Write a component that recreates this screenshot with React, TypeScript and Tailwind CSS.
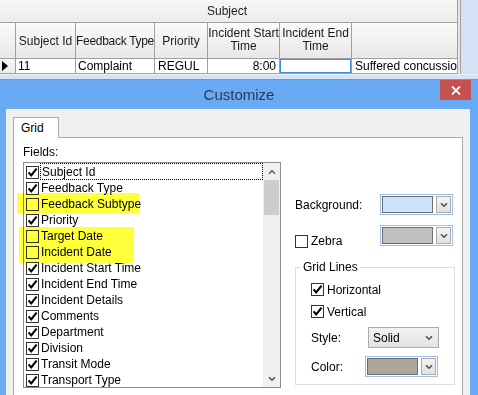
import React from "react";

const Check = ({ checked }: { checked: boolean }) => (
  <div className="w-[13px] h-[13px] border border-[#333333] bg-white flex items-center justify-center shrink-0">
    {checked && (
      <svg width="11" height="11" viewBox="0 0 11 11">
        <path d="M1.6 5.4 L4.2 8.4 L9.6 1.6" stroke="#000" strokeWidth="2.1" fill="none" />
      </svg>
    )}
  </div>
);

const Chevron = () => (
  <svg width="8" height="6" viewBox="0 0 8 6">
    <path d="M1 1.2 L4 4.2 L7 1.2" stroke="#505050" strokeWidth="1.6" fill="none" />
  </svg>
);

const ColorBox = ({ color }: { color: string }) => (
  <div className="w-[73px] h-[21px] border border-[#9cc0ea] p-px flex gap-[3px] bg-white">
    <div className="flex-1 border border-[#6e6e6e]" style={{ background: color }} />
    <div className="w-[15px] border border-[#acacac] bg-gradient-to-b from-[#f4f4f4] to-[#e1e1e1] flex items-center justify-center">
      <Chevron />
    </div>
  </div>
);

const fields: [string, boolean][] = [
  ["Subject Id", true],
  ["Feedback Type", true],
  ["Feedback Subtype", false],
  ["Priority", true],
  ["Target Date", false],
  ["Incident Date", false],
  ["Incident Start Time", true],
  ["Incident End Time", true],
  ["Incident Details", true],
  ["Comments", true],
  ["Department", true],
  ["Division", true],
  ["Transit Mode", true],
  ["Transport Type", true],
];

export default function App() {
  return (
    <div className="w-[478px] h-[395px] overflow-hidden bg-[#d3e2f5] font-['Liberation_Sans',Arial,sans-serif] text-[12px] text-black leading-[14px]">
      {/* Background grid */}
      <div className="flex h-[74px]">
        <div className="w-[458px] flex flex-col border-r border-[#a0a0a0] bg-white">
          <div className="h-[23px] border-b border-[#a0a0a0] bg-gradient-to-b from-[#f7f7f7] to-[#ececec] flex items-center pl-[207px] text-[#1a1a1a]">
            Subject
          </div>
          <div className="h-[36px] border-b border-[#a0a0a0] flex bg-gradient-to-b from-[#fafafa] to-[#e9e9e9] text-[#1a1a1a]">
            <div className="w-[16px] border-r border-[#a0a0a0]" />
            <div className="w-[60px] border-r border-[#a0a0a0] flex items-center justify-center text-center">Subject Id</div>
            <div className="w-[79px] border-r border-[#a0a0a0] flex items-center justify-center text-center whitespace-nowrap tracking-[-0.3px]">Feedback Type</div>
            <div className="w-[53px] border-r border-[#a0a0a0] flex items-center justify-center text-center">Priority</div>
            <div className="w-[72px] border-r border-[#a0a0a0] flex items-center justify-center text-center leading-[13px] pb-[2px]">Incident Start<br />Time</div>
            <div className="w-[72px] border-r border-[#a0a0a0] flex items-center justify-center text-center leading-[13px] pb-[2px]">Incident End<br />Time</div>
            <div className="flex-1" />
          </div>
          <div className="h-[15px] border-b border-[#a0a0a0] flex bg-white whitespace-nowrap">
            <div className="w-[16px] border-r border-[#a0a0a0] bg-gradient-to-b from-[#f7f7f7] to-[#ececec] flex items-center pl-[2px]">
              <svg width="6" height="10" viewBox="0 0 6 10"><polygon points="0,0 6,5 0,10" fill="#000" /></svg>
            </div>
            <div className="w-[60px] border-r border-[#a0a0a0] pl-[2px] flex items-center">11</div>
            <div className="w-[79px] border-r border-[#a0a0a0] pl-[2px] flex items-center">Complaint</div>
            <div className="w-[53px] border-r border-[#a0a0a0] pl-[3px] flex items-center">REGUL</div>
            <div className="w-[72px] border-r border-[#a0a0a0] pr-[3px] flex items-center justify-end">8:00</div>
            <div className="w-[72px] border-r border-[#a0a0a0] flex">
              <div className="flex-1 border border-[#3c8ee6]" />
            </div>
            <div className="flex-1 pl-[3px] flex items-center overflow-hidden">Suffered concussion</div>
          </div>
        </div>
        <div className="w-[3px] bg-[#e6e6e6] border-r border-[#a0a0a0]" />
        <div className="flex-1" />
      </div>
      <div className="h-[5px] border-t border-[#eef3fa]" />

      {/* Dialog */}
      <div className="bg-[#69aaf5] border-t border-[#5b9de8]">
        <div className="h-[29px] flex relative">
          <div className="flex-1 flex items-center justify-center text-[15px] text-[#2b3a50] pt-[1px]">Customize</div>
          <div className="absolute right-[7px] top-0 w-[31px] h-[20px] bg-[#c75050] flex items-center justify-center">
            <svg width="10" height="9" viewBox="0 0 10 9">
              <path d="M1 0.5 L9 8.5 M9 0.5 L1 8.5" stroke="#fff" strokeWidth="1.8" />
            </svg>
          </div>
        </div>
        <div className="ml-[6px] mr-[8px] h-[290px] bg-[#f0f0f0] pt-[8px] pl-[7px] overflow-hidden">
          <div className="w-[46px] h-[21px] -mb-px relative z-10 bg-white border-t border-l border-r border-[#adadad] pl-[7px] pt-[3px]">Grid</div>
          <div className="w-[450px] h-[300px] border border-[#adadad] bg-white relative flex">
            {/* left column */}
            <div className="pl-[9px] pt-[7px] flex flex-col">
              <div className="h-[14px]">Fields:</div>
              <div className="mt-[3px] w-[258px] h-[226px] border border-[#8c8c8c] flex">
                <div className="flex-1 pt-px">
                  {fields.map(([name, c], i) => (
                    <div key={name} className="h-[16px] flex items-center pl-[2px]">
                      <Check checked={c} />
                      {i === 0 ? (
                        <div className="ml-[1px] flex-1 h-[17px] -mt-px border border-dotted border-black pl-px flex items-center">{name}</div>
                      ) : (
                        <div className="ml-[2px] whitespace-nowrap">{name}</div>
                      )}
                    </div>
                  ))}
                </div>
                <div className="w-[17px] bg-[#f0f0f0] flex flex-col">
                  <div className="h-[17px] flex items-center justify-center">
                    <svg width="8" height="6" viewBox="0 0 8 6"><path d="M1 4.8 L4 1.8 L7 4.8" stroke="#606060" strokeWidth="1.6" fill="none" /></svg>
                  </div>
                  <div className="h-[35px] mx-px bg-[#cdcdcd]" />
                  <div className="flex-1" />
                  <div className="h-[17px] flex items-center justify-center">
                    <Chevron />
                  </div>
                </div>
              </div>
            </div>

            {/* right column */}
            <div className="ml-[14px] pt-[56px] flex flex-col w-[160px]">
              <div className="h-[21px] flex items-center">
                <div className="w-[85px]">Background:</div>
                <ColorBox color="#cde1f8" />
              </div>
              <div className="mt-[10px] h-[21px] flex items-start">
                <div className="w-[85px] flex items-center pt-[9px]">
                  <Check checked={false} />
                  <span className="ml-[3px]">Zebra</span>
                </div>
                <ColorBox color="#c0c0c0" />
              </div>
              <fieldset className="mt-[14px] w-[160px] border border-[#dcdcdc] pb-[7px]">
                <legend className="ml-[5px] px-[2px]">Grid Lines</legend>
                <div className="pl-[15px] pt-[9px] flex flex-col">
                  <div className="h-[13px] flex items-center">
                    <Check checked={true} />
                    <span className="ml-[3px]">Horizontal</span>
                  </div>
                  <div className="mt-[9px] h-[13px] flex items-center">
                    <Check checked={true} />
                    <span className="ml-[3px]">Vertical</span>
                  </div>
                  <div className="mt-[9px] h-[21px] flex items-center">
                    <div className="w-[57px]">Style:</div>
                    <div className="w-[71px] h-[21px] border border-[#acacac] bg-gradient-to-b from-[#f2f2f2] to-[#e3e3e3] flex items-center pl-[4px] pr-[5px] justify-between">
                      <span>Solid</span>
                      <Chevron />
                    </div>
                  </div>
                  <div className="mt-[8px] h-[21px] flex items-center">
                    <div className="w-[54px]">Color:</div>
                    <ColorBox color="#aba898" />
                  </div>
                </div>
              </fieldset>
            </div>

            {/* highlighter marks */}
            <div className="absolute left-[3px] top-[55px] w-[122px] h-[20px] bg-[#ffff3c] mix-blend-multiply pointer-events-none" />
            <div className="absolute left-[5px] top-[89px] w-[115px] h-[36px] bg-[#ffff3c] mix-blend-multiply pointer-events-none" />
          </div>
        </div>
      </div>
    </div>
  );
}
